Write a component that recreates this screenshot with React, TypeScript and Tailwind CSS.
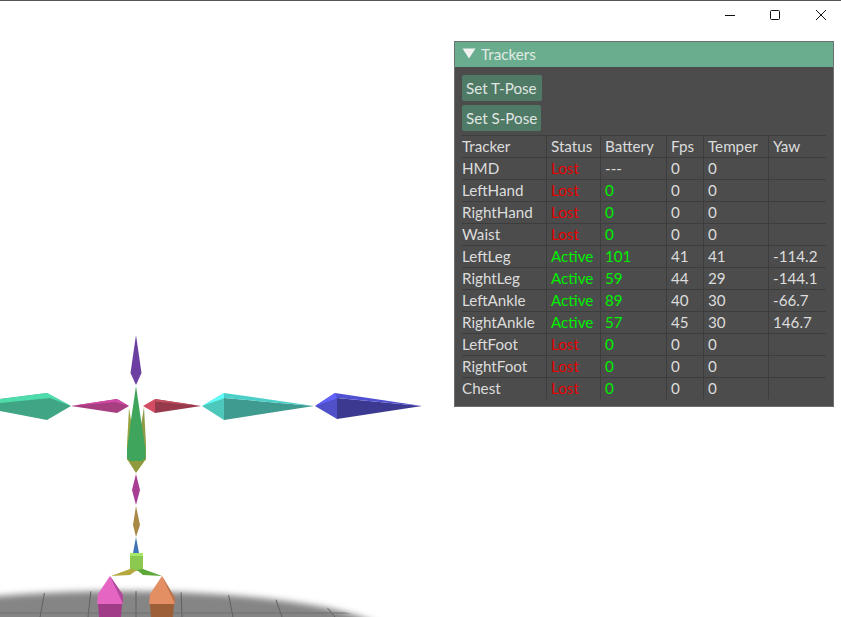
const columns = ["Tracker", "Status", "Battery", "Fps", "Temper", "Yaw"];

const rows = [
  { name: "HMD", status: "Lost", battery: "---", fps: "0", temper: "0", yaw: "" },
  { name: "LeftHand", status: "Lost", battery: "0", fps: "0", temper: "0", yaw: "" },
  { name: "RightHand", status: "Lost", battery: "0", fps: "0", temper: "0", yaw: "" },
  { name: "Waist", status: "Lost", battery: "0", fps: "0", temper: "0", yaw: "" },
  { name: "LeftLeg", status: "Active", battery: "101", fps: "41", temper: "41", yaw: "-114.2" },
  { name: "RightLeg", status: "Active", battery: "59", fps: "44", temper: "29", yaw: "-144.1" },
  { name: "LeftAnkle", status: "Active", battery: "89", fps: "40", temper: "30", yaw: "-66.7" },
  { name: "RightAnkle", status: "Active", battery: "57", fps: "45", temper: "30", yaw: "146.7" },
  { name: "LeftFoot", status: "Lost", battery: "0", fps: "0", temper: "0", yaw: "" },
  { name: "RightFoot", status: "Lost", battery: "0", fps: "0", temper: "0", yaw: "" },
  { name: "Chest", status: "Lost", battery: "0", fps: "0", temper: "0", yaw: "" },
];

const gridCols = "grid grid-cols-[84px_54px_66px_37px_65px_58px]";
const cellLine = "h-[21px] border-l border-[#3d3d3d] pl-[4px] leading-[20px] first:border-l-0 first:pl-0";

function Skeleton() {
  return (
    <svg className="absolute inset-0" width="841" height="617" viewBox="0 0 841 617">
      <defs>
        <filter id="floorBlur" x="-10%" y="-20%" width="120%" height="140%">
          <feGaussianBlur stdDeviation="3" />
        </filter>
        <clipPath id="floorClip">
          <ellipse cx="120" cy="640" rx="273" ry="49" />
        </clipPath>
      </defs>

      {/* floor */}
      <ellipse cx="120" cy="640" rx="273" ry="49" fill="#858585" filter="url(#floorBlur)" />
      <g clipPath="url(#floorClip)" stroke="#606060" strokeWidth="1" fill="none">
        <path d="M45 590L40 617M91 590L88 617M136 590V617M181 590L182 617M228 592L233 617M275 597L282 617M325 605L335 617" />
        <path d="M0 613H360" stroke="#707070" />
      </g>

      {/* left arm */}
      <polygon points="0,399 47,393 71,406 47,420 0,411" fill="#40a584" />
      <polygon points="0,399 47,393 71,406 50,398 0,403" fill="#4fdcab" />
      <polygon points="71,406 117,399 129,406 117,413" fill="#a63e7f" />
      <polygon points="71,406 117,399 129,406 115,402" fill="#d24aa8" />

      {/* right arm */}
      <polygon points="143,406 155,399 155.5,399 155.5,413 155,413" fill="#d24c63" />
      <polygon points="155,399 201,406 155,413" fill="#963a4c" />
      <polygon points="155,399 201,406 155,401.5" fill="#c4505f" />
      <polygon points="202,406 224,393 225,393 225,420 224,420" fill="#4ec8bb" />
      <polygon points="202,406 224,393 225,398" fill="#5ffcfa" />
      <polygon points="224,398 314,406 224,420" fill="#3f9a8f" />
      <polygon points="224,393 314,406 224,398" fill="#4ccfc8" />
      <polygon points="315,406 335,393 339,398 338,419 337,419" fill="#5050c8" />
      <polygon points="315,406 335,393 338,398" fill="#6262ff" />
      <polygon points="337,398 422,406 337,419" fill="#3c3a90" />
      <polygon points="335,393 422,406 337,398" fill="#5050d2" />

      {/* head and torso */}
      <polygon points="136,335 141.5,373 136,385 130.5,373" fill="#6b3fa2" />
      <polygon points="129,408 133,432 133,460 127,460 127,445" fill="#9aa540" />
      <polygon points="144,407 146,445 146,460 140,460 140,432" fill="#8f9a45" />
      <polygon points="127,459 146,459 136,473" fill="#8f9a3c" />
      <polygon points="136,386 141,420 145.5,450 145.5,458 142,461 130,461 127,458 127,450 131,420" fill="#40a55c" />

      {/* spine */}
      <polygon points="136,474 140,490 136,505 132,490" fill="#a83e92" />
      <polygon points="136,506 140,525 136,537 133,525" fill="#a88a45" />
      <polygon points="136,537 139,553 133,553" fill="#3f75b4" />
      <rect x="130" y="553" width="13" height="18" fill="#8ac850" />
      <rect x="130" y="553" width="13" height="3" fill="#a8e868" />

      {/* hips */}
      <polygon points="111,576 130,569 137,570 130,575" fill="#b5a83f" />
      <polygon points="162,576 143,569 137,570 143,575" fill="#5ea83a" />

      {/* feet */}
      <polygon points="110,576 123,595 123,604 97,604 98,594" fill="#e565c2" />
      <polygon points="110,576 123,595 123,604" fill="#b04a9b" />
      <polygon points="98,604 122,604 121,617 99,617" fill="#a03c88" />
      <polygon points="162,576 175,598 175,604 149,604 150,594" fill="#e38e63" />
      <polygon points="162,576 175,598 175,604" fill="#b8734c" />
      <polygon points="150,604 174,604 173,617 151,617" fill="#9c5f38" />
    </svg>
  );
}

function TitleBar() {
  return (
    <div className="relative flex h-[31px] justify-end">
      <div className="absolute inset-x-0 top-0 h-px bg-[#555]" />
      <svg width="130" height="31" viewBox="711 0 130 31" fill="none" stroke="#111" strokeWidth="1">
        <path d="M725 15.5H735" />
        <rect x="770.5" y="10.5" width="9" height="9" rx="1" />
        <path d="M816 10L826 20M826 10L816 20" />
      </svg>
    </div>
  );
}

function TrackersPanel() {
  return (
    <div className="absolute left-[454px] top-[41px] h-[366px] w-[380px] border border-[#6e6e6e] bg-[#4c4c4c] text-[15.2px] leading-[22px] text-[#dcdcdc]">
      <div className="flex h-[25px] items-center gap-[5px] bg-[#6aad8e] pb-[2px] pl-[7px] text-[#e0ebe5]">
        <svg width="14" height="11" viewBox="0 0 14 11">
          <polygon points="0.5,0.5 13.5,0.5 7,10.5" fill="#f2f2f2" />
        </svg>
        <span>Trackers</span>
      </div>
      <div className="px-[7px] pt-[8px]">
        <div className="flex flex-col items-start gap-[4px]">
          <button className="h-[26px] w-[80px] rounded-[2px] bg-[#4f7a66] pl-[4px] text-left text-[#e0e6e2]">Set T-Pose</button>
          <button className="h-[26px] w-[79px] rounded-[2px] bg-[#4f7a66] pl-[4px] text-left text-[#e0e6e2]">Set S-Pose</button>
        </div>
        <div className={`${gridCols} mt-[4px] border-t border-[#3d3d3d]`}>
          {columns.map((col) => (
            <div key={col} className={cellLine}>{col}</div>
          ))}
        </div>
        {rows.map((row) => (
          <div key={row.name} className={`${gridCols} border-t border-[#3d3d3d]`}>
            <div className={cellLine}>{row.name}</div>
            <div className={`${cellLine} ${row.status === "Lost" ? "text-[#e60000]" : "text-[#00f000]"}`}>{row.status}</div>
            <div className={`${cellLine} ${row.battery === "---" ? "" : "text-[#00f000]"}`}>{row.battery}</div>
            <div className={cellLine}>{row.fps}</div>
            <div className={cellLine}>{row.temper}</div>
            <div className={cellLine}>{row.yaw}</div>
          </div>
        ))}
      </div>
    </div>
  );
}

export default function App() {
  return (
    <div className="relative h-[617px] w-[841px] overflow-hidden bg-white font-['Lato',sans-serif]">
      <Skeleton />
      <TitleBar />
      <TrackersPanel />
    </div>
  );
}
